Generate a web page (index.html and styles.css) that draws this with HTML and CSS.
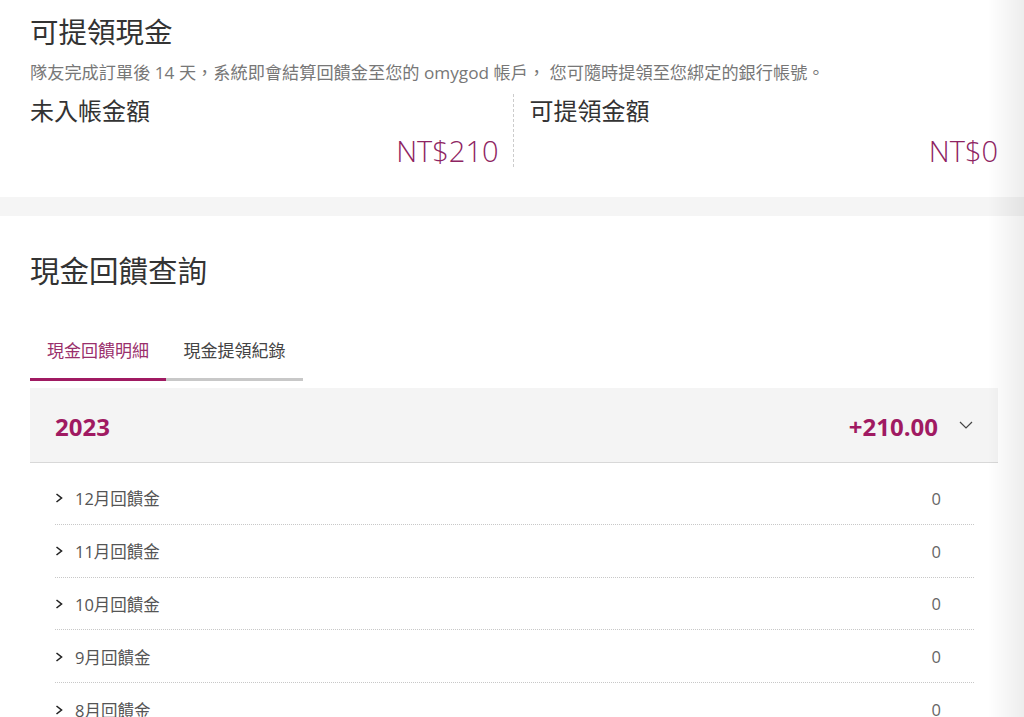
FILE: index.html
```html
<!DOCTYPE html>
<html lang="zh-Hant">
<head>
<meta charset="utf-8">
<title>可提領現金</title>
<link rel="stylesheet" href="styles.css">
</head>
<body>
<section class="cash">
  <h1 class="title">可提領現金</h1>
  <p class="desc">隊友完成訂單後 14 天，系統即會結算回饋金至您的 omygod 帳戶， 您可隨時提領至您綁定的銀行帳號。</p>
  <div class="stats">
    <div class="stat">
      <div class="stat-label">未入帳金額</div>
      <div class="stat-value">NT$210</div>
    </div>
    <div class="stat stat-right">
      <div class="stat-label">可提領金額</div>
      <div class="stat-value">NT$0</div>
    </div>
  </div>
</section>
<div class="band"></div>
<section class="query">
  <h2 class="title">現金回饋查詢</h2>
  <div class="tabs">
    <div class="tab active">現金回饋明細</div>
    <div class="tab">現金提領紀錄</div>
  </div>
  <div class="year-head">
    <span class="year">2023</span>
    <span class="year-total">+210.00</span>
    <svg class="chev-down" width="14" height="8" viewBox="0 0 14 8"><path d="M1 1l6 6 6-6" fill="none" stroke="#444" stroke-width="1.2"/></svg>
  </div>
  <ul class="months">
    <li class="month"><span class="m-name"><svg class="chev-right" width="8" height="10" viewBox="0 0 8 10"><path d="M1.5 1l5 4-5 4" fill="none" stroke="#222" stroke-width="1.6"/></svg>12月回饋金</span><span class="m-val">0</span></li>
    <li class="month"><span class="m-name"><svg class="chev-right" width="8" height="10" viewBox="0 0 8 10"><path d="M1.5 1l5 4-5 4" fill="none" stroke="#222" stroke-width="1.6"/></svg>11月回饋金</span><span class="m-val">0</span></li>
    <li class="month"><span class="m-name"><svg class="chev-right" width="8" height="10" viewBox="0 0 8 10"><path d="M1.5 1l5 4-5 4" fill="none" stroke="#222" stroke-width="1.6"/></svg>10月回饋金</span><span class="m-val">0</span></li>
    <li class="month"><span class="m-name"><svg class="chev-right" width="8" height="10" viewBox="0 0 8 10"><path d="M1.5 1l5 4-5 4" fill="none" stroke="#222" stroke-width="1.6"/></svg>9月回饋金</span><span class="m-val">0</span></li>
    <li class="month"><span class="m-name"><svg class="chev-right" width="8" height="10" viewBox="0 0 8 10"><path d="M1.5 1l5 4-5 4" fill="none" stroke="#222" stroke-width="1.6"/></svg>8月回饋金</span><span class="m-val">0</span></li>
  </ul>
</section>
</body>
</html>
```
FILE: styles.css
```css
* { box-sizing: border-box; }
html, body { margin: 0; padding: 0; background: #fff; }
body {
  font-family: "Open Sans", "Noto Sans CJK TC", sans-serif;
  color: #333;
  overflow: hidden;
  height: 717px;
}
body::after {
  content: "";
  position: fixed;
  top: 0;
  right: 0;
  width: 36px;
  height: 100%;
  background: linear-gradient(to right, rgba(0,0,0,0), rgba(0,0,0,0.07));
  pointer-events: none;
}
.cash { padding: 12px 26px 30px 30px; }
.title {
  margin: 0;
  font-size: 28.5px;
  font-weight: 400;
  line-height: 40px;
  color: #333;
}
.desc {
  margin: 9px 0 0;
  font-size: 17.2px;
  line-height: 24px;
  color: #777;
}
.stats { display: flex; margin-top: 9px; }
.stat { flex: 1; padding-right: 14px; height: 73px; display: flex; flex-direction: column; }
.stat-right { border-left: 1px dashed #ccc; padding-left: 16px; padding-right: 0; }
.stat-label { font-size: 24px; line-height: 34px; color: #333; }
.stat-value {
  margin-top: 5px;
  text-align: right;
  font-size: 29px;
  font-weight: 300;
  line-height: 36px;
  color: #8e2462;
}
.band { height: 19px; background: #f5f5f5; }
.query { padding: 35px 26px 0 30px; }
.query .title { font-size: 29.5px; }
.tabs { display: flex; margin-top: 48px; }
.tab {
  width: 136px;
  text-align: center;
  font-size: 17px;
  line-height: 24px;
  padding-bottom: 15px;
  color: #444;
  border-bottom: 3px solid #c8c8c8;
}
.tab.active { color: #9a2f6c; border-bottom-color: #a01a62; }
.tab + .tab { width: 137px; }
.year-head {
  margin-top: 7px;
  height: 75px;
  background: #f4f4f4;
  border-bottom: 1px solid #d8d8d8;
  display: flex;
  align-items: center;
  padding: 0 25px;
}
.year { font-size: 24px; font-weight: 700; color: #a01a62; flex: 1; padding-top: 2px; }
.year-total { font-size: 24px; font-weight: 700; color: #a01a62; padding-top: 2px; }
.chev-down { margin-left: 21px; }
.months { list-style: none; margin: 0; padding: 9px 24px 0 25px; }
.month {
  height: 52.8px;
  display: flex;
  align-items: center;
  justify-content: space-between;
  border-bottom: 1px dotted #c8c8c8;
  font-size: 16.5px;
  color: #555;
  padding-right: 33px;
  padding-top: 1px;
}
.m-name { display: flex; align-items: center; }
.chev-right { margin-right: 12px; }
.m-val { color: #666; }
```
